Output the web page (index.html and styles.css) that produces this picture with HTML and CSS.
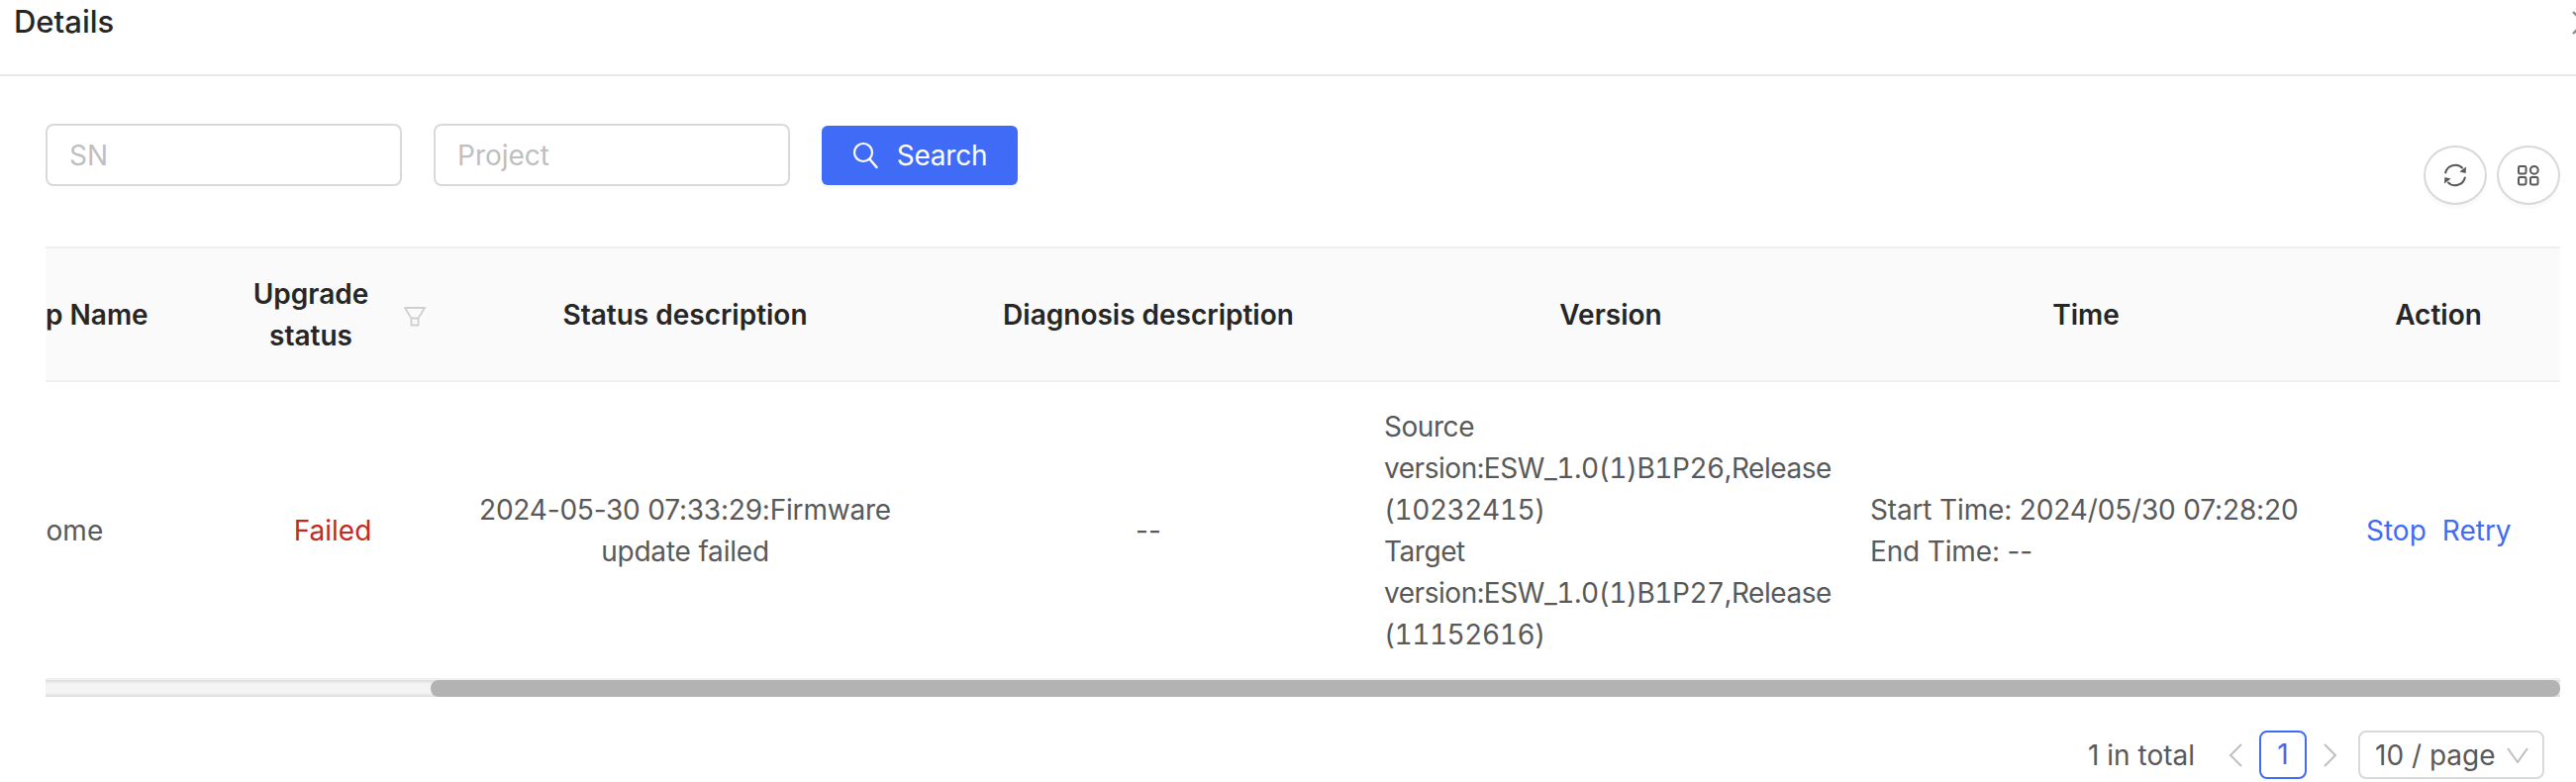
FILE: index.html
```html
<!DOCTYPE html>
<html lang="en">
<head>
<meta charset="utf-8">
<title>Details</title>
<link rel="stylesheet" href="styles.css">
</head>
<body>
<div class="modal">
  <header class="modal-head">
    <div class="modal-title">Details</div>
    <svg class="close-icon" viewBox="0 0 24 24" width="24" height="24"><path d="M1 1 23 23M23 1 1 23" fill="none" stroke="#8c8c8c" stroke-width="2.4"/></svg>
  </header>
  <main class="modal-body">
    <div class="toolbar">
      <form class="filters">
        <input class="field" type="text" placeholder="SN">
        <input class="field" type="text" placeholder="Project">
        <button class="search-btn" type="button">
          <svg viewBox="0 0 26 28" width="26" height="28"><circle cx="11" cy="11" r="9" fill="none" stroke="#fff" stroke-width="2.2"/><path d="M17.5 17.8 24.5 26" fill="none" stroke="#fff" stroke-width="2.4" stroke-linecap="round"/></svg>
          <span>Search</span>
        </button>
      </form>
      <div class="tools">
        <button class="round-btn" type="button" aria-label="Refresh">
          <svg viewBox="0 0 24 24" width="24" height="24"><path d="M2 10.2A10.2 10.2 0 0 1 19.6 5.2M22 13.8A10.2 10.2 0 0 1 4.4 18.8" fill="none" stroke="#595959" stroke-width="2"/><path d="M23 3.6 22.6 10 16.4 8.4ZM1 20.4 1.4 14 7.6 15.6Z" fill="#595959"/></svg>
        </button>
        <button class="round-btn" type="button" aria-label="Columns">
          <svg viewBox="0 0 22 22" width="22" height="22"><rect x="1" y="2" width="7.5" height="7.5" rx="1.4" fill="none" stroke="#595959" stroke-width="2"/><circle cx="16.8" cy="5.8" r="3.9" fill="none" stroke="#595959" stroke-width="2"/><rect x="1" y="13" width="7.5" height="7.5" rx="1.4" fill="none" stroke="#595959" stroke-width="2"/><rect x="13" y="13" width="7.5" height="7.5" rx="1.4" fill="none" stroke="#595959" stroke-width="2"/></svg>
        </button>
      </div>
    </div>
    <div class="table-clip">
      <table class="grid">
        <colgroup>
          <col class="c-name"><col class="c-state"><col class="c-status"><col class="c-diag"><col class="c-version"><col class="c-time"><col class="c-action">
        </colgroup>
        <thead>
          <tr>
            <th class="name-cell">Group Name</th>
            <th class="state-head">Upgrade status
              <svg class="filter-icon" viewBox="0 0 22 20" width="22" height="20"><path d="M1 1H21L14.5 11.5V18.5H7.5V11.5ZM7.5 11.5H14.5" fill="none" stroke="#cfcfcf" stroke-width="1.8"/></svg>
            </th>
            <th>Status description</th>
            <th>Diagnosis description</th>
            <th>Version</th>
            <th>Time</th>
            <th class="action-head">Action</th>
          </tr>
        </thead>
        <tbody>
          <tr>
            <td class="name-cell">Home</td>
            <td class="failed">Failed</td>
            <td class="status-cell">2024-05-30 07:33:29:Firmware update failed</td>
            <td>--</td>
            <td class="version-cell">Source version:ESW_1.0(1)B1P26,Release (10232415)<br>Target version:ESW_1.0(1)B1P27,Release (11152616)</td>
            <td class="time-cell">Start Time: 2024/05/30 07:28:20<br>End Time: --</td>
            <td class="action-cell"><a class="link" href="#">Stop</a><a class="link" href="#">Retry</a></td>
          </tr>
        </tbody>
      </table>
    </div>
    <div class="scrollbar"><div class="scroll-gap"></div><div class="scroll-thumb"></div></div>
    <nav class="pager">
      <span class="total">1 in total</span>
      <svg class="chev" viewBox="0 0 14 26" width="14" height="26"><path d="M13 2 2 13 13 24" fill="none" stroke="#bfbfbf" stroke-width="2"/></svg>
      <span class="page-no">1</span>
      <svg class="chev" viewBox="0 0 14 26" width="14" height="26"><path d="M1 2 12 13 1 24" fill="none" stroke="#bfbfbf" stroke-width="2"/></svg>
      <span class="size-select">10 / page
        <svg viewBox="0 0 22 16" width="22" height="16"><path d="M1 1 11 15 21 1" fill="none" stroke="#bfbfbf" stroke-width="2"/></svg>
      </span>
    </nav>
  </main>
</div>
</body>
</html>
```
FILE: styles.css
```css
* { box-sizing: border-box; }
html, body { margin: 0; padding: 0; }
body {
  width: 2602px;
  height: 790px;
  overflow: hidden;
  background: #fff;
  font-family: Inter, "Liberation Sans", sans-serif;
  font-size: 28px;
  line-height: 42px;
  color: #595959;
}
.modal-head {
  height: 77px;
  border-bottom: 2px solid #e8e8e8;
  display: flex;
  justify-content: space-between;
  align-items: flex-start;
  padding: 0 0 0 14px;
}
.modal-title { font-size: 31px; font-weight: 500; line-height: 44px; color: #262626; }
.close-icon { margin: 11px -20px 0 0; flex: none; }
.modal-body { padding: 48px 16px 0 46px; }
.toolbar { height: 124px; display: flex; justify-content: space-between; align-items: flex-start; }
.filters { display: flex; align-items: center; gap: 32px; height: 63px; }
.field {
  width: 360px;
  height: 63px;
  border: 2px solid #d9d9d9;
  border-radius: 8px;
  padding: 0 22px;
  font: inherit;
  color: #595959;
  background: #fff;
  outline: none;
}
.field::placeholder { color: #bfbfbf; }
.search-btn {
  width: 198px;
  height: 60px;
  border: 0;
  border-radius: 6px;
  background: #3f6bf6;
  box-shadow: 0 4px 0 rgba(0, 0, 0, .02);
  color: #fff;
  font: inherit;
  letter-spacing: -.2px;
  display: flex;
  align-items: center;
  justify-content: center;
  gap: 19px;
  padding: 0;
}
.tools { display: flex; gap: 10px; margin-top: 22px; }
.round-btn {
  width: 64px;
  height: 60px;
  border: 2px solid #d9d9d9;
  border-radius: 50%;
  background: #fff;
  box-shadow: 0 4px 0 rgba(0, 0, 0, .02);
  padding: 0;
  display: flex;
  align-items: center;
  justify-content: center;
}
.table-clip { width: 2540px; overflow: hidden; }
.grid {
  width: 2678px;
  margin-left: -138px;
  table-layout: fixed;
  border-collapse: collapse;
}
.c-name { width: 324px; }
.c-state { width: 208px; }
.c-status { width: 504px; }
.c-diag { width: 432px; }
.c-version { width: 502px; }
.c-time { width: 458px; }
.c-action { width: 250px; }
th {
  height: 135px;
  padding: 0 10px;
  background: #fafafa;
  border-top: 2px solid #f0f0f0;
  border-bottom: 2px solid #f0f0f0;
  font-weight: 600;
  color: #262626;
  text-align: center;
}
td { height: 300px; padding: 0 42px; text-align: center; }
.state-head { position: relative; padding: 0 54px 0 10px; }
.filter-icon { position: absolute; left: 176px; top: 59px; }
th.name-cell, td.name-cell { padding: 0 10px 0 0; }
.action-head { padding: 0 0 0 4px; }
.failed { padding: 0 10px; color: #c4291c; }
.status-cell { padding: 0 30px; letter-spacing: -.2px; }
.version-cell { padding: 0 22px; text-align: left; font-feature-settings: "tnum"; letter-spacing: -.45px; }
.time-cell { padding: 0 0 0 11px; text-align: left; letter-spacing: -.15px; }
.action-cell { padding: 0 0 0 54px; text-align: left; white-space: nowrap; }
.link { color: #3f6bf6; text-decoration: none; }
.link + .link { margin-left: 16px; }
.scrollbar {
  width: 2540px;
  height: 19px;
  border-top: 2px solid #f0f0f0;
  display: flex;
  background: linear-gradient(#dcdcdc, #f4f4f4 25%, #f4f4f4 75%, #dcdcdc);
}
.scroll-gap { width: 389px; flex: none; }
.scroll-thumb { flex: 1; background: #b3b3b3; border-radius: 8px; }
.pager {
  display: flex;
  align-items: center;
  justify-content: flex-end;
  height: 49px;
  margin: 34px 0 0 0;
  padding-right: 16px;
}
.total { margin-right: 34px; }
.page-no {
  width: 48px;
  height: 49px;
  margin: 0 17px;
  border: 2px solid #3f6bf6;
  border-radius: 8px;
  color: #3f6bf6;
  text-align: center;
  line-height: 45px;
}
.size-select {
  width: 188px;
  height: 49px;
  margin-left: 21px;
  border: 2px solid #d9d9d9;
  border-radius: 8px;
  display: flex;
  align-items: center;
  gap: 11px;
  padding-left: 15px;
  white-space: nowrap;
}
```
